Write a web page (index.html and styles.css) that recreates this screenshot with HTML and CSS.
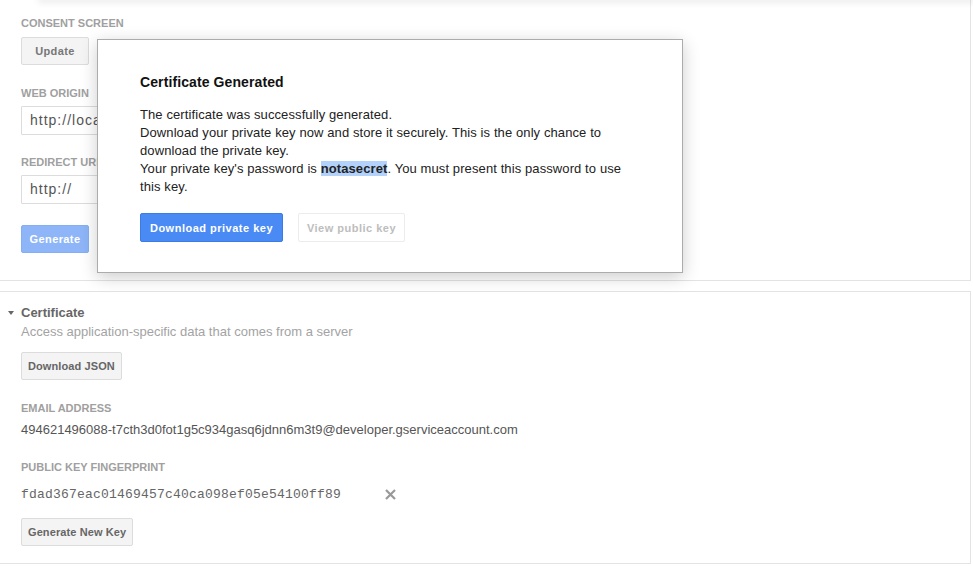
FILE: index.html
```html
<!DOCTYPE html>
<html>
<head>
<meta charset="utf-8">
<link rel="stylesheet" href="styles.css">
</head>
<body>
<div class="topshade"></div>
<div class="panel panel-top">
  <div class="label">Consent screen</div>
  <button class="btn btn-update">Update</button>
  <div class="label">Web origin</div>
  <div class="input">http://localhost</div>
  <div class="label">Redirect URI</div>
  <div class="input">http://</div>
  <button class="btn btn-generate">Generate</button>
</div>
<div class="panel panel-cert">
  <div class="cert-head"><span class="caret"></span>Certificate</div>
  <div class="desc">Access application-specific data that comes from a server</div>
  <button class="btn btn-json">Download JSON</button>
  <div class="label label-email">Email address</div>
  <div class="value">494621496088-t7cth3d0fot1g5c934gasq6jdnn6m3t9@developer.gserviceaccount.com</div>
  <div class="label label-fp">Public key fingerprint</div>
  <div class="fp-row">
    <span class="fp">fdad367eac01469457c40ca098ef05e54100ff89</span>
    <svg class="x" width="11" height="11" viewBox="0 0 11 11"><path d="M1 1L10 10M10 1L1 10" stroke="#999" stroke-width="2.2" fill="none"/></svg>
  </div>
  <button class="btn btn-newkey">Generate New Key</button>
</div>
<div class="modal">
  <div class="modal-title">Certificate Generated</div>
  <p class="modal-text">The certificate was successfully generated.<br>Download your private key now and store it securely. This is the only chance to download the private key.<br>Your private key's password is <b class="hl">notasecret</b>. You must present this password to use this key.</p>
  <div class="modal-actions">
    <button class="mbtn mbtn-primary">Download private key</button>
    <button class="mbtn mbtn-plain">View public key</button>
  </div>
</div>
</body>
</html>
```
FILE: styles.css
```css
* { box-sizing: border-box; }
html, body { margin: 0; padding: 0; background: #fff; }
body {
  font-family: "Liberation Sans", Arial, sans-serif;
  font-size: 13px;
  color: #222;
  width: 973px;
  height: 566px;
  overflow: hidden;
  position: relative;
}
.topshade {
  height: 0;
  margin-left: 40px;
  box-shadow: 0 0 7px 2px rgba(0,0,0,0.12);
  position: relative;
  z-index: 1;
}
.panel {
  margin-left: -1px;
  width: 972px;
  border: 1px solid #e3e3e3;
  background: #fff;
  display: flex;
  flex-direction: column;
  align-items: flex-start;
  padding-left: 21px;
}
.panel-top {
  border-top: none;
  height: 281px;
  padding-top: 16px;
}
.panel-cert {
  margin-top: 10px;
  height: 273px;
  padding-top: 12px;
}
.label {
  font-size: 11px;
  font-weight: bold;
  color: #a0a0a0;
  text-transform: uppercase;
  line-height: 14px;
  height: 14px;
  margin-bottom: 7px;
}
.btn {
  font-family: "Liberation Sans", Arial, sans-serif;
  font-size: 11px;
  font-weight: bold;
  letter-spacing: 0.4px;
  height: 28px;
  padding: 0 6px;
  border: 1px solid #dcdcdc;
  border-radius: 2px;
  background: #f4f4f4;
  color: #777;
  margin: 0;
}
.btn-update { width: 68px; margin-bottom: 21px; }
.input {
  width: 320px;
  height: 29px;
  border: 1px solid #dcdcdc;
  border-radius: 1px;
  font-size: 14px;
  letter-spacing: 1px;
  color: #555;
  line-height: 27px;
  padding-left: 8px;
  margin-bottom: 20px;
  margin-top: -1px;
}
.input + .label + .input { margin-bottom: 22px; }
.btn-generate {
  width: 68px;
  background: #8db5f7;
  border-color: #86aef2;
  color: #fff;
  margin-top: -1px;
}
.cert-head {
  position: relative;
  font-weight: bold;
  font-size: 13px;
  color: #666;
  line-height: 18px;
}
.caret {
  position: absolute;
  left: -13px;
  top: 7px;
  width: 0;
  height: 0;
  border-left: 3px solid transparent;
  border-right: 3px solid transparent;
  border-top: 4px solid #666;
}
.desc {
  color: #a3a3a3;
  line-height: 18px;
  font-size: 13px;
  margin-top: 1px;
}
.btn-json { margin-top: 11px; color: #666; letter-spacing: 0.1px; }
.label-email { margin-top: 21px; margin-bottom: 6px; }
.value {
  color: #555;
  line-height: 18px;
  font-size: 13px;
}
.label-fp { margin-top: 21px; margin-bottom: 11px; }
.fp-row {
  display: flex;
  align-items: center;
  height: 18px;
}
.fp {
  font-family: "Liberation Mono", "Courier New", monospace;
  font-size: 13px;
  letter-spacing: 0.2px;
  color: #666;
}
.x { margin-left: 44px; }
.btn-newkey { margin-top: 15px; color: #666; letter-spacing: 0.1px; }

.modal {
  position: absolute;
  left: 97px;
  top: 39px;
  width: 586px;
  height: 234px;
  background: #fff;
  border: 1px solid #acacac;
  box-shadow: 0 4px 16px rgba(0,0,0,0.2);
  padding: 33px 55px 0 42px;
  z-index: 2;
}
.modal-title {
  font-weight: bold;
  font-size: 14px;
  color: #111;
  line-height: 18px;
  letter-spacing: 0.1px;
}
.modal-text {
  margin: 15px 0 0;
  font-size: 13px;
  line-height: 18px;
  color: #222;
  letter-spacing: 0.1px;
}
.hl { background: #b2d2fb; }
.modal-actions {
  display: flex;
  gap: 15px;
  margin-top: 17px;
}
.mbtn {
  font-family: "Liberation Sans", Arial, sans-serif;
  font-size: 11px;
  font-weight: bold;
  letter-spacing: 0.5px;
  height: 29px;
  border-radius: 2px;
  margin: 0;
  padding: 0;
}
.mbtn-primary {
  width: 143px;
  background: #4a8af4;
  border: 1px solid #3a7be6;
  color: #fff;
}
.mbtn-plain {
  width: 107px;
  background: #fff;
  border: 1px solid #ececec;
  color: #bdbdbd;
}
```
